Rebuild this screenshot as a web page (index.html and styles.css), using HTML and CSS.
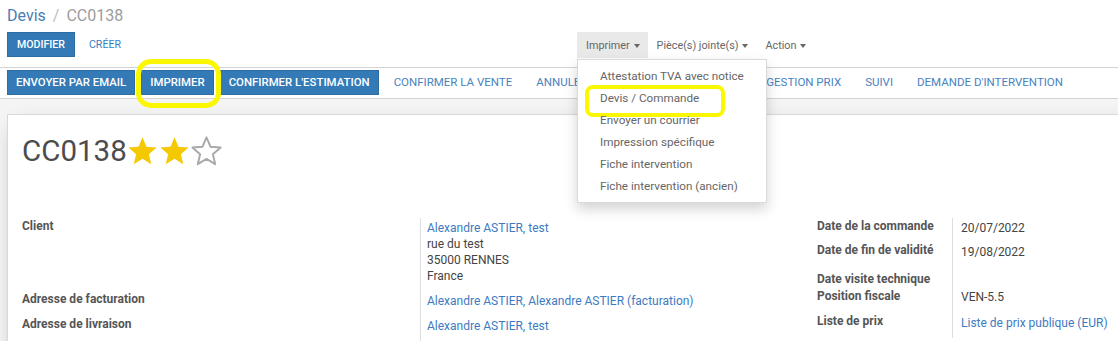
FILE: index.html
```html
<!DOCTYPE html>
<html lang="fr">
<head>
<meta charset="utf-8">
<title>Devis / CC0138</title>
<link rel="stylesheet" href="styles.css">
</head>
<body>
<div class="app">
  <header class="cp">
    <ol class="crumbs">
      <li class="crumb-link">Devis</li>
      <li class="crumb-sep">/</li>
      <li class="crumb-cur">CC0138</li>
    </ol>
    <div class="cp-row">
      <div class="cp-buttons">
        <button class="btn btn-primary">MODIFIER</button>
        <button class="btn btn-link">CRÉER</button>
      </div>
      <div class="sidebar">
        <div class="dropdown">
          <button class="dd-toggle active">Imprimer<span class="caret"></span></button>
          <ul class="dd-menu">
            <li class="dd-item">Attestation TVA avec notice</li>
            <li class="dd-item ring-item">Devis / Commande</li>
            <li class="dd-item">Envoyer un courrier</li>
            <li class="dd-item">Impression spécifique</li>
            <li class="dd-item">Fiche intervention</li>
            <li class="dd-item">Fiche intervention (ancien)</li>
          </ul>
        </div>
        <div class="dropdown">
          <button class="dd-toggle">Pièce(s) jointe(s)<span class="caret"></span></button>
        </div>
        <div class="dropdown">
          <button class="dd-toggle">Action<span class="caret"></span></button>
        </div>
      </div>
    </div>
  </header>

  <div class="statusbar">
    <button class="sbtn sbtn-primary">ENVOYER PAR EMAIL</button>
    <button class="sbtn sbtn-primary ring-btn">IMPRIMER</button>
    <button class="sbtn sbtn-primary">CONFIRMER L'ESTIMATION</button>
    <button class="sbtn sbtn-link">CONFIRMER LA VENTE</button>
    <button class="sbtn sbtn-link">ANNULER</button>
    <button class="sbtn sbtn-link">ENVOYER PAR COURRIER</button>
    <button class="sbtn sbtn-link">GESTION PRIX</button>
    <button class="sbtn sbtn-link">SUIVI</button>
    <button class="sbtn sbtn-link">DEMANDE D'INTERVENTION</button>
  </div>

  <main class="content">
    <div class="sheet">
      <div class="title">
        <h1>CC0138</h1>
        <div class="stars">
          <svg class="star star-on" viewBox="0 0 24 24"><path d="M12 1L15.06 8.29L22.94 8.95L16.95 14.11L18.76 21.8L12 17.7L5.24 21.8L7.05 14.11L1.06 8.95L8.94 8.29Z"/></svg>
          <svg class="star star-on" viewBox="0 0 24 24"><path d="M12 1L15.06 8.29L22.94 8.95L16.95 14.11L18.76 21.8L12 17.7L5.24 21.8L7.05 14.11L1.06 8.95L8.94 8.29Z"/></svg>
          <svg class="star star-off" viewBox="0 0 24 24"><path d="M12 1L15.06 8.29L22.94 8.95L16.95 14.11L18.76 21.8L12 17.7L5.24 21.8L7.05 14.11L1.06 8.95L8.94 8.29Z"/></svg>
        </div>
      </div>

      <div class="groups">
        <div class="group group-main">
          <div class="label">Client</div>
          <div class="value">
            <span class="link">Alexandre ASTIER, test</span><br>
            rue du test<br>
            35000 RENNES<br>
            France
          </div>
          <div class="label">Adresse de facturation</div>
          <div class="value"><span class="link">Alexandre ASTIER, Alexandre ASTIER (facturation)</span></div>
          <div class="label">Adresse de livraison</div>
          <div class="value"><span class="link">Alexandre ASTIER, test</span></div>
        </div>
        <div class="group group-side">
          <div class="label">Date de la commande</div>
          <div class="value">20/07/2022</div>
          <div class="label label-wide">Date de fin de validité</div>
          <div class="value">19/08/2022</div>
          <div class="label label-tight">Date visite technique</div>
          <div class="value"></div>
          <div class="label">Position fiscale</div>
          <div class="value value-high">VEN-5.5</div>
          <div class="label">Liste de prix</div>
          <div class="value"><span class="link">Liste de prix publique (EUR)</span></div>
        </div>
      </div>
    </div>
  </main>
</div>
</body>
</html>
```

FILE: styles.css
```css
* {
  box-sizing: border-box;
}

html,
body {
  margin: 0;
  background: #fff;
}

body {
  width: 1118px;
  height: 352px;
  overflow: hidden;
  font-family: Roboto, "Noto Sans", sans-serif;
  color: #4c4c4c;
}

button {
  font-family: inherit;
  cursor: pointer;
}

/* ---------- control panel ---------- */
.cp {
  padding: 4px 7px 9px;
  border-bottom: 1px solid #d3d3d3;
}

.crumbs {
  list-style: none;
  margin: 0;
  padding: 0;
  display: flex;
  font-size: 16px;
  line-height: 24px;
}

.crumb-link {
  color: #4a7db6;
}

.crumb-sep {
  color: #bdbdbd;
  margin: 0 7px;
}

.crumb-cur {
  color: #9c9c9c;
}

.cp-row {
  display: grid;
  grid-template-columns: 570px 1fr;
  margin-top: 4px;
  height: 26px;
}

.cp-buttons {
  display: flex;
  gap: 4px;
  align-items: flex-start;
}

.btn {
  height: 25px;
  padding: 0 9px;
  border: 1px solid transparent;
  border-radius: 0;
  background: none;
  font-size: 10.6px;
  line-height: 23px;
}

.btn-primary {
  background: #337ab7;
  border-color: #2e6da4;
  color: #fff;
  font-weight: 500;
}

.btn-link {
  color: #3d7bbf;
}

/* ---------- print / attachment / action menus ---------- */
.sidebar {
  display: flex;
  align-items: flex-start;
}

.dropdown {
  position: relative;
}

.dd-toggle {
  display: flex;
  align-items: center;
  gap: 4px;
  height: 26px;
  padding: 0 8px 0 9px;
  border: 0;
  background: none;
  color: #666;
  font-size: 10.8px;
}

.dd-toggle.active {
  background: #e9e9e9;
}

.caret {
  width: 0;
  height: 0;
  border-top: 4px solid #666;
  border-left: 3.5px solid transparent;
  border-right: 3.5px solid transparent;
  margin-top: 1px;
}

.dd-menu {
  position: absolute;
  top: 100%;
  left: 0;
  z-index: 20;
  width: 190px;
  margin: 1px 0 0;
  padding: 5px 0;
  list-style: none;
  background: #fff;
  border: 1px solid rgba(0, 0, 0, 0.15);
  box-shadow: 0 6px 12px rgba(0, 0, 0, 0.175);
}

.dd-item {
  position: relative;
  padding: 0 22px;
  line-height: 22px;
  font-size: 11.7px;
  color: #666;
  white-space: nowrap;
}

/* yellow marker rings */
.ring-item::after {
  content: "";
  position: absolute;
  left: 7px;
  top: -2px;
  width: 132px;
  height: 24px;
  border: 4px solid #fbf700;
  border-radius: 8px;
  pointer-events: none;
}

.ring-btn {
  position: relative;
}

.ring-btn::after {
  content: "";
  position: absolute;
  left: -6px;
  right: -8px;
  top: -12px;
  bottom: -14px;
  border: 5px solid #fbf700;
  border-radius: 15px;
  pointer-events: none;
  z-index: 5;
}

/* ---------- status bar ---------- */
.statusbar {
  display: flex;
  gap: 6px;
  padding: 2px 7px 3px;
  border-bottom: 1px solid #d3d3d3;
  background: #fff;
}

.sbtn {
  height: 25px;
  padding: 0 8px;
  border: 1px solid transparent;
  border-radius: 0;
  background: none;
  font-size: 11.5px;
  line-height: 23px;
  white-space: nowrap;
}

.sbtn-primary {
  background: #337ab7;
  border-color: #2e6da4;
  color: #fff;
  font-size: 11.4px;
  font-weight: 500;
}

.sbtn-link {
  color: #4a82c0;
}

/* ---------- form sheet ---------- */
.content {
  height: 242px;
  padding: 15px 0 0 7px;
  background: #f4f4f4;
  overflow: hidden;
}

.sheet {
  width: 1640px;
  min-height: 300px;
  padding: 18px 14px 0;
  background: #fff;
  border: 1px solid #d9d9d9;
  box-shadow: 0 5px 20px -10px rgba(0, 0, 0, 0.4);
}

.title {
  display: flex;
  align-items: center;
  height: 36px;
}

.title h1 {
  margin: 0;
  font-size: 29.5px;
  font-weight: 400;
  line-height: 36px;
  color: #4c4c4c;
}

.stars {
  display: flex;
  gap: 1px;
}

.star {
  width: 31px;
  height: 31px;
}

.star-on path {
  fill: #f5c900;
}

.star-off path {
  fill: #fff;
  stroke: #a9a9a9;
  stroke-width: 1.5;
  stroke-linejoin: round;
}

.groups {
  display: flex;
  margin-top: 48.5px;
}

.group {
  width: 795px;
  display: grid;
  align-content: start;
}

.group-main {
  grid-template-columns: 399px 1fr;
}

.group-side {
  grid-template-columns: 136px 1fr;
}

.label {
  padding-bottom: 8.5px;
  border-right: 1px solid #dedede;
  font-size: 12px;
  font-weight: 700;
  line-height: 16.3px;
  color: #555;
}

.label-wide {
  padding-bottom: 12.7px;
}

.label-tight {
  padding-bottom: 0.7px;
}

.value {
  padding: 2px 0 6.5px 6px;
  font-size: 12px;
  line-height: 16.3px;
  color: #444;
}

.group-side .value {
  padding-left: 8px;
}

.value-high {
  padding-top: 1px;
}

.link {
  color: #3d7bbf;
}
```
